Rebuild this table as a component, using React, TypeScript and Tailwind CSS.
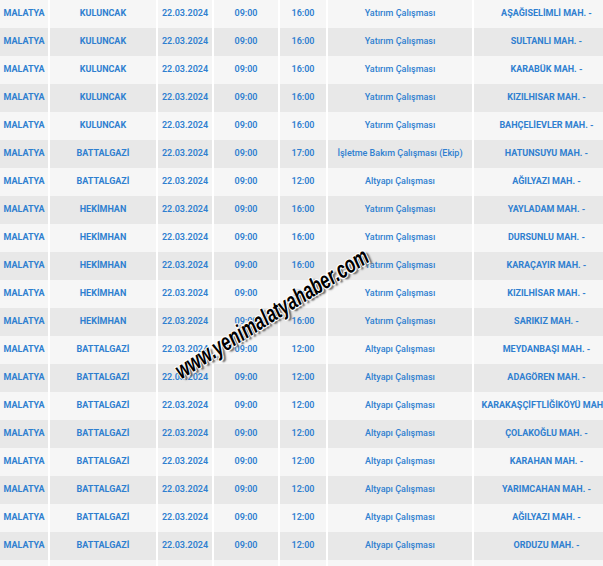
import React from 'react';

interface Row {
  district: string;
  end: string;
  work: string;
  area: string;
}

const K = 'KULUNCAK';
const B = 'BATTALGAZİ';
const H = 'HEKİMHAN';
const YAT = 'Yatırım Çalışması';
const ALT = 'Altyapı Çalışması';

const rows: Row[] = [
  { district: K, end: '16:00', work: YAT, area: 'AŞAĞISELİMLİ MAH. -' },
  { district: K, end: '16:00', work: YAT, area: 'SULTANLI MAH. -' },
  { district: K, end: '16:00', work: YAT, area: 'KARABÜK MAH. -' },
  { district: K, end: '16:00', work: YAT, area: 'KIZILHISAR MAH. -' },
  { district: K, end: '16:00', work: YAT, area: 'BAHÇELİEVLER MAH. -' },
  { district: B, end: '17:00', work: 'İşletme Bakım Çalışması (Ekip)', area: 'HATUNSUYU MAH. -' },
  { district: B, end: '12:00', work: ALT, area: 'AĞILYAZI MAH. -' },
  { district: H, end: '16:00', work: YAT, area: 'YAYLADAM MAH. -' },
  { district: H, end: '16:00', work: YAT, area: 'DURSUNLU MAH. -' },
  { district: H, end: '16:00', work: YAT, area: 'KARAÇAYIR MAH. -' },
  { district: H, end: '16:00', work: YAT, area: 'KIZILHİSAR MAH. -' },
  { district: H, end: '16:00', work: YAT, area: 'SARIKIZ MAH. -' },
  { district: B, end: '12:00', work: ALT, area: 'MEYDANBAŞI MAH. -' },
  { district: B, end: '12:00', work: ALT, area: 'ADAGÖREN MAH. -' },
  { district: B, end: '12:00', work: ALT, area: 'KARAKAŞÇİFTLİĞİKÖYÜ MAH. -' },
  { district: B, end: '12:00', work: ALT, area: 'ÇOLAKOĞLU MAH. -' },
  { district: B, end: '12:00', work: ALT, area: 'KARAHAN MAH. -' },
  { district: B, end: '12:00', work: ALT, area: 'YARIMCAHAN MAH. -' },
  { district: B, end: '12:00', work: ALT, area: 'AĞILYAZI MAH. -' },
  { district: B, end: '12:00', work: ALT, area: 'ORDUZU MAH. -' },
];

export default function App() {
  return (
    <div className="relative w-[603px] h-[566px] overflow-hidden bg-white font-['Roboto',sans-serif]">
      <table className="w-[619px] table-fixed border-collapse text-[9px] text-[#2f7fd0]">
        <colgroup>
          <col className="w-[49px]" />
          <col className="w-[108px]" />
          <col className="w-[56px]" />
          <col className="w-[66px]" />
          <col className="w-[48px]" />
          <col className="w-[146px]" />
          <col className="w-[146px]" />
        </colgroup>
        <tbody>
          {rows.map((r, i) => (
            <tr key={i} className={`h-[28px] ${i % 2 === 0 ? 'bg-[#f6f6f6]' : 'bg-[#e8e8e8]'}`}>
              <td className="text-center font-bold whitespace-nowrap">MALATYA</td>
              <td className="text-center font-bold whitespace-nowrap border-l-2 border-white">{r.district}</td>
              <td className="text-center font-semibold whitespace-nowrap border-l-2 border-white">22.03.2024</td>
              <td className="text-center font-semibold whitespace-nowrap border-l-2 border-white">09:00</td>
              <td className="text-center font-semibold whitespace-nowrap border-l-2 border-white">{r.end}</td>
              <td className="text-center font-medium whitespace-nowrap border-l-2 border-white">{r.work}</td>
              <td className="text-center font-bold whitespace-nowrap border-l-2 border-white">{r.area}</td>
            </tr>
          ))}
          <tr className="h-[28px] bg-[#f6f6f6]">
            <td />
            <td className="border-l-2 border-white" />
            <td className="border-l-2 border-white" />
            <td className="border-l-2 border-white" />
            <td className="border-l-2 border-white" />
            <td className="border-l-2 border-white" />
            <td className="border-l-2 border-white" />
          </tr>
        </tbody>
      </table>

      {/* site watermark */}
      <div className="absolute left-[116px] top-[305px] w-[300px] text-center -rotate-[32deg] scale-x-[0.7] font-['Liberation_Sans',sans-serif] text-[24px] font-bold italic leading-none text-black [text-shadow:-1px_-1px_0_#fff,1px_-1px_0_#fff,-1px_1px_0_#fff,1px_1px_0_#fff,3px_3px_2px_#666]">
        www.yenimalatyahaber.com
      </div>
    </div>
  );
}
